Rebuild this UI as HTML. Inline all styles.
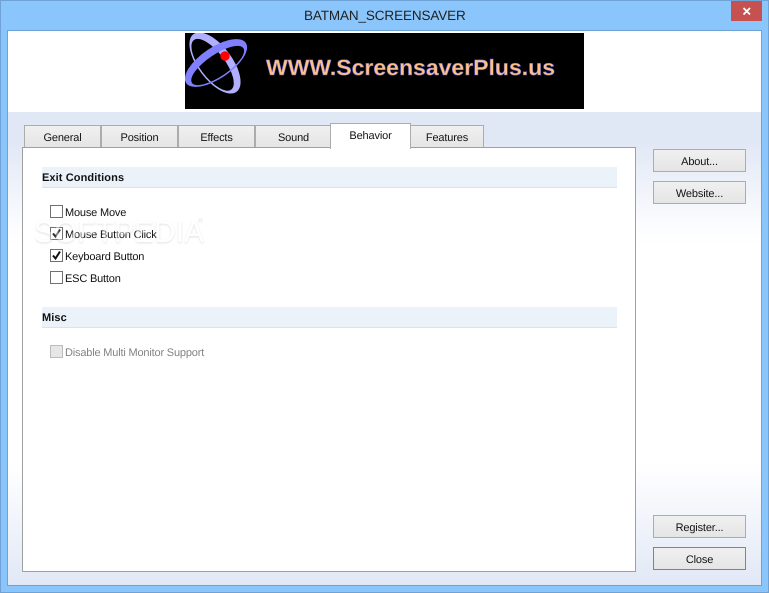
<!DOCTYPE html>
<html><head><meta charset="utf-8"><style>
*{box-sizing:border-box;margin:0;padding:0}
html,body{width:769px;height:593px;overflow:hidden;background:#8AC5FB;font-family:"Liberation Sans",sans-serif;font-size:11px;color:#111;text-rendering:geometricPrecision}
.a{position:absolute}
#win{position:absolute;left:0;top:0;width:769px;height:593px;border:1px solid #6fa3d6;background:#8AC5FB}
#client{position:absolute;left:7px;top:30px;width:755px;height:556px;border:1px solid #6fa3d6;background:linear-gradient(#fff 0,#fff 81px,#e1e8f5 81px,#e1e8f5 112px,#fbfcfe 195px,#fff 215px,#fff 430px,#fbfcfe 450px,#e1e8f5 554px)}
.tab{position:absolute;top:125px;height:23px;border:1px solid #acacac;background:linear-gradient(#f0f0f0,#e5e5e5);text-align:center;line-height:24px;letter-spacing:-.15px}
.btn{position:absolute;left:653px;width:93px;height:23px;border:1px solid #acacac;background:linear-gradient(#f0f0f0,#e5e5e5);text-align:center;line-height:25px;letter-spacing:-.15px}
.sec{position:absolute;left:42px;width:575px;height:21px;background:#ecf2fa;border-bottom:1px solid #dde2ea;font-weight:bold;line-height:23px;letter-spacing:.1px}
.cb{position:absolute;left:50px;width:13px;height:13px;border:1px solid #707070;background:#fff}
.lb{position:absolute;left:65px;line-height:17px;letter-spacing:-.18px;white-space:nowrap}
</style></head><body>
<div id="win"></div>
<div id="client"></div>
<div class="a" style="left:304px;top:7px;font-size:13.5px;line-height:17px;color:#222;letter-spacing:-.12px;white-space:nowrap">BATMAN_SCREENSAVER</div>
<div class="a" style="left:731px;top:1px;width:31px;height:20px;background:#c75050"></div>
<svg class="a" style="left:731px;top:1px" width="31" height="20" viewBox="0 0 31 20"><path d="M12.500 7L19 13.500M19 7L12.500 13.500" stroke="#fff" stroke-width="1.800" fill="none"/></svg>

<svg class="a" style="left:185px;top:33px" width="399" height="76" viewBox="185 33 399 76">
<rect x="185" y="33" width="399" height="76" fill="#000"/>
<g transform="rotate(53 215 63)"><path fill="#b0b0ff" fill-rule="evenodd" d="M179 63a36 17 0 1 0 72 0a36 17 0 1 0-72 0ZM184 66a31 12.500 0 1 0 62 0a31 12.500 0 1 0-62 0Z"/></g>
<g transform="rotate(-34 216 63)"><path fill="#8080ff" fill-rule="evenodd" d="M180 63a36 15.500 0 1 0 72 0a36 15.500 0 1 0-72 0ZM185 66a31 11 0 1 0 62 0a31 11 0 1 0-62 0Z"/></g>
<circle cx="225" cy="56" r="4.700" fill="#f00"/>
<text x="266" y="75" font-family="Liberation Sans" font-weight="bold" font-size="22" fill="#ffc080" stroke="#6060e0" stroke-width=".5" textLength="289" lengthAdjust="spacingAndGlyphs">WWW.ScreensaverPlus.us</text>
</svg>

<div class="tab" style="left:24px;width:77px">General</div>
<div class="tab" style="left:101px;width:77px">Position</div>
<div class="tab" style="left:178px;width:77px">Effects</div>
<div class="tab" style="left:255px;width:77px">Sound</div>
<div class="tab" style="left:410px;width:74px">Features</div>
<div class="a" style="left:22px;top:147px;width:614px;height:425px;border:1px solid #a0a0a0;background:#fff"></div>
<div class="a" style="left:330px;top:123px;width:81px;height:26px;border:1px solid #acacac;border-bottom:0;background:#fff;text-align:center;line-height:24px;letter-spacing:-.15px">Behavior</div>

<div class="sec" style="top:167px">Exit Conditions</div>
<div class="cb" style="top:205px"></div><div class="lb" style="top:205px">Mouse Move</div>
<div class="cb" style="top:227px"></div><div class="lb" style="top:227px">Mouse Button Click</div>
<div class="cb" style="top:249px"></div><div class="lb" style="top:249px">Keyboard Button</div>
<div class="cb" style="top:271px"></div><div class="lb" style="top:271px">ESC Button</div>
<svg class="a" style="left:50px;top:227px" width="13" height="13"><path d="M3 6.500L5.500 9.500L10 2.500" fill="none" stroke="#222" stroke-width="2"/></svg>
<svg class="a" style="left:50px;top:249px" width="13" height="13"><path d="M3 6.500L5.500 9.500L10 2.500" fill="none" stroke="#111" stroke-width="2"/></svg>

<div class="a" style="left:34px;top:216px;font-size:30px;line-height:34px;color:#fff;opacity:.45;text-shadow:0 1px 2px #bbb;white-space:nowrap">SOFTPEDIA</div>
<div class="a" style="left:198px;top:218px;font-size:7px;color:#e4e4e4">®</div>

<div class="sec" style="top:307px">Misc</div>
<div class="cb" style="top:345px;background:#e6e6e6;border-color:#bcbcbc"></div>
<div class="lb" style="top:345px;color:#838383">Disable Multi Monitor Support</div>

<div class="btn" style="top:149px">About...</div>
<div class="btn" style="top:181px">Website...</div>
<div class="btn" style="top:515px">Register...</div>
<div class="btn" style="top:547px;border-color:#3c94ea">Close</div>
</body></html>
